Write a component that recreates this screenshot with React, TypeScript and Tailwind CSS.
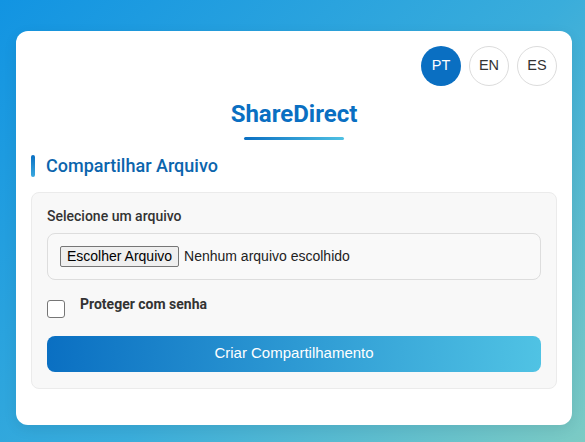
import { useState } from "react";

const langs = ["PT", "EN", "ES"];

export default function App() {
  const [lang, setLang] = useState("PT");
  const [protect, setProtect] = useState(false);

  return (
    <div className="min-h-screen w-full bg-[linear-gradient(135deg,#1294e2_0%,#3aaddb_55%,#7ccbc4_100%)] pt-[31px] pb-[18px] pl-[16px]">
      <div className="w-[556px] rounded-[12px] bg-white px-[15px] pt-[15px] pb-[36px] shadow-[0_4px_14px_rgba(0,0,0,0.08)]">
        {/* Language switch */}
        <div className="flex justify-end gap-[8px]">
          {langs.map((l) => (
            <button
              key={l}
              onClick={() => setLang(l)}
              className={`flex h-[40px] w-[40px] items-center justify-center rounded-full font-['Liberation_Sans',Arial,sans-serif] text-[14.5px] ${
                lang === l
                  ? "bg-[#0a6fc2] text-white"
                  : "border border-[#dcdcdc] bg-white text-[#333]"
              }`}
            >
              {l}
            </button>
          ))}
        </div>

        {/* Title */}
        <div className="mt-[14px] flex flex-col items-center">
          <h1 className="font-['Roboto',sans-serif] text-[24px] leading-[28.8px] font-bold text-[#0a6fc2]">
            ShareDirect
          </h1>
          <div className="mt-[8px] h-[3px] w-[100px] rounded-full bg-[linear-gradient(90deg,#0a6fc2,#4fc1e3)]" />
        </div>

        {/* Section header */}
        <div className="mt-[15px] flex items-stretch gap-[11px]">
          <div className="w-[4px] rounded-[2px] bg-[linear-gradient(180deg,#0a6fc2,#3aa9e0)]" />
          <h2 className="font-['Roboto',sans-serif] text-[18px] leading-[22px] font-medium text-[#0b65ad]">
            Compartilhar Arquivo
          </h2>
        </div>

        {/* Form box */}
        <div className="mt-[15px] rounded-[8px] border border-[#ebebeb] bg-[#f8f8f8] px-[15px] pt-[15px] pb-[16px]">
          <label className="block font-['Roboto',sans-serif] text-[14px] leading-[16.8px] font-medium text-[#333]">
            Selecione um arquivo
          </label>

          <div className="mt-[8px] flex h-[47px] items-center gap-[5px] rounded-[8px] border border-[#dddddd] bg-[#f9f9f9] px-[12px]">
            <span className="flex h-[21px] items-center rounded-[2px] border border-[#767676] bg-[#efefef] px-[6px] font-['Liberation_Sans',Arial,sans-serif] text-[14px] text-black">
              Escolher Arquivo
            </span>
            <span className="font-['Liberation_Sans',Arial,sans-serif] text-[14px] text-[#222]">
              Nenhum arquivo escolhido
            </span>
          </div>

          <div
            className="mt-[16px] flex cursor-pointer items-start gap-[15px]"
            onClick={() => setProtect(!protect)}
          >
            <span className="mt-[4px] flex h-[18px] w-[18px] items-center justify-center rounded-[3px] border border-[#767676] bg-white">
              {protect && (
                <svg width="12" height="12" viewBox="0 0 12 12">
                  <path d="M2 6.5l2.5 2.5L10 3" fill="none" stroke="#0a6fc2" strokeWidth="2" />
                </svg>
              )}
            </span>
            <span className="font-['Roboto',sans-serif] text-[14px] leading-[16.8px] font-bold text-[#333]">
              Proteger com senha
            </span>
          </div>

          <button className="mt-[18px] flex h-[36px] w-full items-center justify-center rounded-[8px] bg-[linear-gradient(95deg,#0a6fc2,#50c3e4)] font-['Liberation_Sans',Arial,sans-serif] text-[15px] text-white">
            Criar Compartilhamento
          </button>
        </div>
      </div>
    </div>
  );
}
